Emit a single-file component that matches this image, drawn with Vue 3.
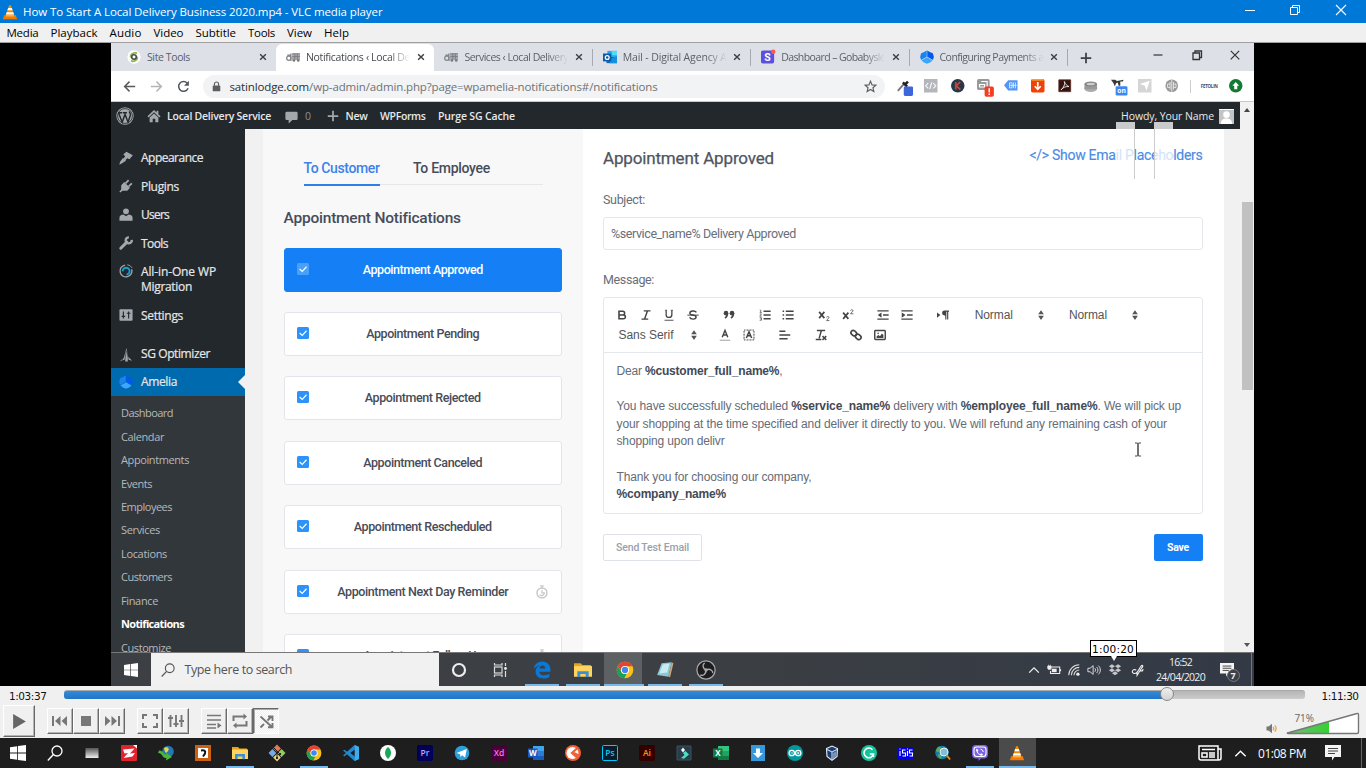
<script setup>
const measure = (el, width) => {
  const range = document.createRange()
  range.selectNodeContents(el)
  const natural = range.getBoundingClientRect().width
  el.style.letterSpacing = (width - natural) / el.textContent.length + 'px'
}
// Adjusts tracking so a single line of text takes a given width.
const vFit = { mounted: (el, { value }) => measure(el, value) }

const cone = '<path fill="#f48b00" d="M7.1 1.2h1.8L12.6 12H3.4z"/><path fill="#fff" d="M6.2 4h3.6l.8 2.3H5.4zM4.7 8.3h6.6l.8 2.2H3.9z"/><path fill="#ee7c05" d="M2.4 11h11.2l1.6 4.2H.8z"/><path fill="#ffb04a" d="M4.4 11h7.2l.4 1.4H4z"/>'
const chrome = '<circle cx="8" cy="8" r="7.4" fill="#fbc116"/><path fill="#e04436" d="M1.5 4.5A7.4 7.4 0 0 1 14.6 4.6H8A3.4 3.4 0 0 0 4.8 9.2z"/><path fill="#1ea052" d="M1.5 4.5 4.9 9.6A3.5 3.5 0 0 0 9.6 11L7.4 15.4A7.4 7.4 0 0 1 1.5 4.5z"/><circle cx="8" cy="8" r="3.6" fill="#fff"/><circle cx="8" cy="8" r="2.8" fill="#4285f4"/>'
const folder = '<path fill="#e8a317" d="M0 2h6l1.5 1.5H15V6H0z"/><path fill="#ffd45e" d="M0 4.5h16V14H0z"/><path fill="#3c8fd0" d="M3 9h10v5.2h-2.6V11.6H5.6v2.6H3z"/>'
const amelia = '<path fill="#1a84ee" d="M7.7.5v7.2L1.300 11.400A8 8 0 0 1 1.300 3.800Q4 3 7.700.5z"/><path fill="#005aee" d="M8.300.5Q12 3 14.700 3.800a8 8 0 0 1 0 7.600L8.300 7.700z"/><path fill="#3ba6ff" d="M8 8.300l6.300 3.600Q12 14.500 8 15.800 4 14.500 1.700 11.900z"/>'
const truck = '<g fill="none" stroke="#85878c" stroke-width="1.500"><circle cx="3.200" cy="9.500" r="2.400"/><path d="M5.600 4v8.500M1.500 6h4"/></g><path fill="#a6a8ad" d="M7 4h9v7.500H7z"/><path d="M7 4.300h9M7 7.500h9M10 4v7M13 4v7" stroke="#7b7d82" stroke-width="1"/><circle cx="9" cy="12" r="1.500" fill="#777"/><circle cx="14" cy="12" r="1.500" fill="#777"/>'
const win = '<path fill="#fff" d="M0 2.2 7.2 1.2v6.4H0zM8 1.1 16 0v7.6H8zM0 8.4h7.2v6.4L0 13.8zM8 8.4h8V16l-8-1.1z"/>'
const tile = (t, bg, fg, edge, size = 8.5) => `<rect x=".5" y=".5" width="15" height="15" rx="1" fill="${bg}" stroke="${edge}"/><text x="8" y="11" text-anchor="middle" font-family="Open Sans, sans-serif" font-weight="600" font-size="${size}" fill="${fg}">${t}</text>`
const office = (t, a, b, c) => `<path fill="${a}" d="M5 1h11v5H5z"/><path fill="${b}" d="M5 6h11v5H5z"/><path fill="${c}" d="M5 11h11v4H5z"/><path fill="${c}" d="M0 3.5h9.5v9H0z"/><text x="4.8" y="11" text-anchor="middle" font-family="Open Sans, sans-serif" font-weight="700" font-size="8" fill="#fff">${t}</text>`

const icons = {
  cone, chrome, folder, amelia, truck, win,
  search: '<circle cx="10" cy="6" r="5" fill="none" stroke="currentColor" stroke-width="1.3"/><path d="M6.4 9.6.8 15.4" stroke="currentColor" stroke-width="1.4"/>',
  siteTools: '<circle cx="8" cy="8" r="7.6" fill="#fff"/><path d="M11.5 3.5C7 2.5 3.5 5 4.2 8.6M4.5 12.5c4 1.3 7.8-1.2 7.1-4.9" fill="none" stroke="#8dbb52" stroke-width="2.2"/><circle cx="8" cy="8" r="2.6" fill="none" stroke="#4a4a4a" stroke-width="1.8"/>',
  outlook: '<path fill="#28a8ea" d="M5 1h11v7H5z"/><path fill="#50d9ff" d="M10 1h6v5h-6z"/><path fill="#0f66b7" d="M4 8h12v7H4z"/><path fill="#1490df" d="M10 9l6-2v8H7z"/><path fill="#0b5ba6" d="M0 4h9.5v9H0z"/><circle cx="4.8" cy="8.5" r="2.2" fill="none" stroke="#fff" stroke-width="1.4"/>',
  dash: '<rect y=".5" width="15" height="15" rx="2" fill="#5a52dd"/><text x="7.3" y="12.6" text-anchor="middle" font-family="Roboto, sans-serif" font-weight="700" font-size="12" fill="#fff">S</text><circle cx="14" cy="2" r="2.5" fill="#fa5a50"/>',
  close: '<path d="M4.2 4.2l7.6 7.6M11.8 4.2l-7.6 7.6" stroke="currentColor" stroke-width="1.9"/>',
  plus: '<path d="M8 2v12M2 8h12" stroke="currentColor" stroke-width="2"/>',
  back: '<path d="M15 8H2M8 2 2 8l6 6" fill="none" stroke="currentColor" stroke-width="1.8"/>',
  fwd: '<path d="M1 8h13M8 2l6 6-6 6" fill="none" stroke="currentColor" stroke-width="1.8"/>',
  reload: '<path d="M13.6 10.2A6 6 0 1 1 12.6 4" fill="none" stroke="currentColor" stroke-width="1.9"/><path fill="currentColor" d="M14.6 1v6H8.6z"/>',
  lock: '<rect x="2.5" y="6.4" width="11" height="8.6" rx="1" fill="currentColor"/><path d="M5 7V4.5a3 3 0 0 1 6 0V7" fill="none" stroke="currentColor" stroke-width="1.7"/>',
  star: '<path d="M8 1.6 9.9 6l4.7.4-3.6 3.1 1.1 4.7L8 11.7l-4.1 2.5L5 9.5 1.4 6.4 6.1 6z" fill="none" stroke="currentColor" stroke-width="1.4"/>',
  picker: '<path d="M1 14 8 6" stroke="#777" stroke-width="2.2"/><path d="M7 4l5 5M9.5 6.5 13 3" stroke="#222" stroke-width="3"/><rect x="8" y="9" width="11" height="11" rx="1.5" fill="#3d66db"/>',
  code: '<path fill="#b4b6bc" d="M0 0h16v16H0z"/><path d="M5 5 2 8l3 3M11 5l3 3-3 3M9.2 4 6.8 12" fill="none" stroke="#fff" stroke-width="1.2"/>',
  kred: '<circle cx="8" cy="8" r="8" fill="#26384c"/><path d="M5.6 3.5v9M11 3.5 6.4 8l4.6 4.5" fill="none" stroke="#c8473b" stroke-width="2"/>',
  alert: '<rect width="15" height="13" rx="2" fill="#999"/><path d="M3 6.5h6v3H3zM5 3h7v6" fill="none" stroke="#fff" stroke-width="1.4"/><rect x="9" y="9" width="11" height="12" rx="2" fill="#f43e22"/><path d="M14.5 11v5M14.5 17.3v1.7" stroke="#fff" stroke-width="1.7"/>',
  tag: '<path fill="#5395f5" d="M5 1.5h11v12H5L0 7.5z"/><path d="M6.5 4.5h3v6h-3zM11.2 4v7M13.5 4v7M7 7.5h8" fill="none" stroke="#e8f0ff"/>',
  down: '<rect width="16" height="16" rx="2" fill="#ee4208"/><path fill="#f6a22e" d="M1 0h14v2H1z"/><path d="M8 3.5V12M4.5 8.6 8 12.2l3.5-3.6" fill="none" stroke="#fff" stroke-width="2"/>',
  pdf: '<path fill="#351310" d="M1 1h14v14H1z" stroke="#5b2c22"/><path d="M7.5 3c1.5 3-1.5 8-4 10 2-3 6-4.500 9.500-4C11 8 8 6 7.500 3z" fill="none" stroke="#eee" stroke-width="1.1"/>',
  disk: '<ellipse cx="8" cy="11.500" rx="7.500" ry="4" fill="#aaa"/><path fill="#999" d="M.5 6h15v6H.5z"/><ellipse cx="8" cy="6" rx="7.500" ry="3" fill="#858585"/><ellipse cx="8" cy="5.800" rx="5" ry="1.500" fill="#ccc"/>',
  onx: '<path fill="#383838" d="M0 1h5l2 1.500L15 1l-1 2h-3v5H9l-1-4-2 1-1.500 4L3 5z"/><rect x="5.500" y="8.500" width="14" height="11" rx="1.500" fill="#3e86f5"/><text x="12.500" y="17" text-anchor="middle" font-family="Open Sans, sans-serif" font-weight="700" font-size="8" fill="#fff">on</text>',
  send: '<rect width="16" height="16" fill="#d5d5d5"/><path fill="#fff" d="M2 6l12-4-4 12-2-6z"/>',
  globe: '<circle cx="8" cy="8" r="7.500" fill="#999"/><path d="M6 3.500v9M10 3.500v9M8 1v14M6 6H3v4h3M10 6h3v4h-3" fill="none" stroke="#eee"/>',
  up: '<circle cx="8" cy="8" r="8" fill="#137a34"/><path fill="#fff" d="M8 3.500 12 8H9.800v4H6.200V8H4z"/>',
  wp: '<circle cx="8" cy="8" r="7.200" fill="#a3a8ad" stroke="#a3a8ad"/><circle cx="8" cy="8" r="6.600" fill="none" stroke="#23282d" stroke-width=".7"/><path d="M2.200 5.200l3.300 8.300L8 6.500l2.700 7 2-6c.5-1.700-.5-2.500-1-3.500M1.800 5.100h3.800M6.200 5.100h3.500" fill="none" stroke="#23282d" stroke-width="1.300"/>',
  home: '<path fill="#a3a8ad" d="M8 1 11 4V2h2v4l2.500 2.400-1.300 1.200L8 3.800 1.800 9.600.5 8.400zM8 5l5 4.600V15H9.500v-4h-3v4H3V9.600z"/>',
  comment: '<path fill="#a3a8ad" d="M2 1h12a1.500 1.500 0 0 1 1.500 1.500v7A1.500 1.500 0 0 1 14 11H9l-4.500 4.500V11H2A1.500 1.500 0 0 1 .5 9.500v-7A1.500 1.500 0 0 1 2 1z"/>',
  brush: '<path fill="#a3a8ad" d="M8.500.8 15.800 4.800 12 9.500 9.500 8.200 7 10.800 4.700 9 7 6.400 5 3.800z"/><path fill="#a3a8ad" d="M4.500 8 8 11 3 14.200.3 15.600l1-3.400z"/>',
  plug: '<path fill="#a3a8ad" d="M6 3.500 12.500 10 9.500 13.500H4L1.500 15.500.4 14.300 2.500 12V7z"/><path d="M7.500 5 11 1.300M11 8.500l3.700-3.500" stroke="#a3a8ad" stroke-width="2"/>',
  user: '<circle cx="8" cy="3.800" r="3.300" fill="#a3a8ad"/><path fill="#a3a8ad" d="M.5 14.500V11C.5 8.500 3 7.500 5 7.500l3 2 3-2c2 0 4.500 1 4.500 3.500v3.500z"/>',
  wrench: '<path d="M2 14 9 7" stroke="#a3a8ad" stroke-width="3.400" stroke-linecap="round"/><path d="M14.600 4.500A3.500 3.500 0 1 1 11.300 1.500" fill="none" stroke="#a3a8ad" stroke-width="2.700"/>',
  aio: '<path d="M7 1.200A6.800 6.800 0 1 0 14.500 6" fill="none" stroke="#a3a8ad" stroke-width="1.500"/><path d="M4.300 8.500A3.900 3.900 0 1 1 8.600 12" fill="none" stroke="#12a0d8" stroke-width="2.200"/><path d="M9.500.8A7.400 7.400 0 0 1 15 4.500" fill="none" stroke="#a3a8ad"/>',
  settings: '<rect x=".5" y="1.500" width="15" height="13" rx="1" fill="#a3a8ad"/><path d="M5 4v8M11 4v8M3 9.500h4M9 6h4" stroke="#23282d" stroke-width="1.300"/>',
  sg: '<path fill="#a3a8ad" d="M8.500 0 10.500 10 15 14.500 10 13v2.500H7V13l-6 2 4.500-4z"/><path d="M8.300 3 6.500 15M9 3l2 12M4.500 11l-1 4" stroke="#23282d" stroke-width=".7"/>',
  check: '<path d="M3.500 8 7 11.300 12.700 5" fill="none" stroke="#fff" stroke-width="1.500"/>',
  timer: '<circle cx="8" cy="9" r="5.700" fill="none" stroke="#c8c8c8" stroke-width="1.700"/><path d="M6 1h4M8 1v3M8 6v3h2.500A2.800 2.800 0 0 1 5.500 11" stroke="#c8c8c8" stroke-width="1.500" fill="none"/>',
  bold: '<path d="M4 3h5a2.500 2.500 0 0 1 0 5H4zM4 8h6a2.500 2.500 0 0 1 0 5H4z" fill="none" stroke="currentColor" stroke-width="2.100"/>',
  italic: '<path d="M5 2.500h9M2 13.500h9M9.800 3 6.200 13" stroke="currentColor" stroke-width="1.900"/>',
  underline: '<path d="M4.200 1.500v6a3.800 3.800 0 0 0 7.600 0v-6" fill="none" stroke="currentColor" stroke-width="1.700"/><path d="M2 15h12" stroke="currentColor" stroke-width="1.200"/><path d="M2.500 1.700h3M10.300 1.700h3" stroke="currentColor"/>',
  strike: '<path d="M12.500 4.500C11 1.800 3.800 1.800 3.800 5.500c0 3.500 8.300 1.500 8.300 5.300 0 3.500-7.300 3.500-8.600.2" fill="none" stroke="currentColor" stroke-width="1.900"/><path d="M.5 8.200h15" stroke="currentColor" stroke-width="1.300"/>',
  quote: '<g fill="currentColor"><circle cx="4" cy="5.500" r="3.100"/><circle cx="12" cy="5.500" r="3.100"/></g><path d="M5.900 5.500c0 3.500-1 5.100-3.300 6.500M13.900 5.500c0 3.500-1 5.100-3.300 6.500" fill="none" stroke="currentColor" stroke-width="2.200"/>',
  ol: '<path d="M6 3h9.500M6 8h9.500M6 13h9.500" stroke="currentColor" stroke-width="1.900"/><path d="M1 1.500h1.300v3M1 4.500h2.800M1 6.500h2.300L1 9.500h2.700M.8 11.500h2.500v3.500H.8M1.500 13.200h1.800" fill="none" stroke="currentColor" stroke-width=".9"/>',
  ul: '<path d="M5 3h10.500M5 8h10.500M5 13h10.500" stroke="currentColor" stroke-width="1.900"/><path d="M.8 3h2M.8 8h2M.8 13h2" stroke="currentColor" stroke-width="2"/>',
  sub: '<path d="M1.500 3.800l7 8.400M8.500 3.800l-7 8.400" stroke="currentColor" stroke-width="2.200"/><path d="M11.500 11.200c0-1.600 3.200-1.600 3.200.2 0 1.500-3.200 2-3.200 4h3.700" fill="none" stroke="currentColor"/>',
  sup: '<path d="M1.500 4.800l7 8.400M8.500 4.800l-7 8.400" stroke="currentColor" stroke-width="2.200"/><path d="M11.500 2.200c0-1.600 3.200-1.600 3.200.2 0 1.500-3.200 2-3.200 4h3.700" fill="none" stroke="currentColor"/>',
  outdent: '<path d="M.5 2.500h15M8 8h7.500M.5 13.500h15" stroke="currentColor" stroke-width="1.900"/><path fill="currentColor" d="M6 4.500v7L1 8z"/>',
  indent: '<path d="M.5 2.500h15M8 8h7.500M.5 13.500h15" stroke="currentColor" stroke-width="1.900"/><path fill="currentColor" d="M1 4.500v7L6 8z"/>',
  rtl: '<path fill="currentColor" d="M0 4.500v7L4.500 8zM10 2h6v1.600h-1V14h-1.500V3.600h-1V14H11V8.500H10a3.200 3.200 0 0 1 0-6.500z"/>',
  updown: '<path fill="currentColor" d="M8 1.500 11.800 7H4.200zM8 14.500 4.200 9h7.600z"/>',
  acolor: '<path d="M4.300 11 8 1.800 11.700 11M5.500 8h5" fill="none" stroke="currentColor" stroke-width="1.900"/><path d="M1 15h14" stroke="#aaa" stroke-width="1.500"/>',
  abg: '<rect x="1.500" y="1.500" width="13" height="13" fill="none" stroke="#777" stroke-width="2.500" stroke-dasharray="1 1"/><path d="M4.500 12 8 3.500 11.500 12M5.500 9h5" fill="none" stroke="currentColor" stroke-width="1.900"/>',
  align: '<path d="M.5 3h8M.5 8h14.500M.5 13h11" stroke="currentColor" stroke-width="1.900"/>',
  clean: '<path d="M2.500 2h11M8.500 2 5.500 12.500M1 14h7.500" stroke="currentColor" stroke-width="1.900"/><path d="M10 9.500l5 5M15 9.500l-5 5" stroke="currentColor" stroke-width="1.900"/>',
  link: '<g fill="none" stroke="currentColor" stroke-width="2.200"><rect x="1" y="2.500" width="8" height="6" rx="3" transform="rotate(40 5 5.500)"/><rect x="7" y="7.500" width="8" height="6" rx="3" transform="rotate(40 11 10.500)"/></g>',
  image: '<rect x="1" y="2" width="14" height="12" rx="1" fill="none" stroke="currentColor" stroke-width="1.900"/><path fill="currentColor" d="M3.500 12V9.500L6 8l2 1.500L10.500 6l2 2v4z"/><circle cx="5.500" cy="5.800" r="1.100" fill="currentColor"/>',
  ring: '<circle cx="8" cy="8" r="6" fill="none" stroke="#eee" stroke-width="2.200"/>',
  taskview: '<g fill="none" stroke="#ddd" stroke-width="1.200"><rect x="2.500" y="5" width="7.500" height="6"/><path d="M2.500 1v2h7.500V1M2.500 15v-2h7.500v2M13.500 1v3M13.500 9v6"/></g><circle cx="13.500" cy="6.500" r="1.400" fill="#eee"/>',
  edge: '<path fill="#0a78d7" d="M.6 7.200C1.200 3 4.200.5 8.200.5c4.800 0 7.300 3.300 7.300 7.300v1.700H5.600c.2 2.200 2 3.200 4.300 3.200 1.800 0 3.200-.5 4.600-1.300v3c-1.500.8-3.200 1.200-5.200 1.200-4.300 0-7-2.400-7-6.200 0-2.700 1.300-4.600 3.700-5.700C3.600 4.300 1.800 5.300.6 7.200zM5.700 6.600h5.200c0-1.600-.8-2.600-2.400-2.600-1.500 0-2.500 1-2.800 2.600z"/>',
  notepad: '<path fill="#8cc7d6" d="M5 2l9-1-3 13-10-1.500z"/><path fill="#c9ecf2" d="M6 3l6-.7-2 8L3 11z"/><path fill="#c8a878" d="M14 1l1.500 1-3 12.500L11 14z"/>',
  obs: '<circle cx="8" cy="8" r="7.300" fill="#1d1d1f" stroke="#aaa" stroke-width="1"/><g fill="none" stroke="#aaa" stroke-width="1.100"><path d="M8 8C5 6.500 5 3.500 7 2.500M8 8c3-1.500 5.600.2 5.400 2.500M8 8c.2 3.300-2.300 5-4.500 4"/><circle cx="8" cy="8" r=".8"/></g>',
  chev: '<path d="M2.500 11 8 5.500l5.500 5.500" fill="none" stroke="currentColor" stroke-width="1.500"/>',
  battery: '<path d="M5 4.500h9.500v7.500H4V9M15.500 7v2.500" fill="none" stroke="#eee" stroke-width="1.200"/><path fill="#eee" d="M5.500 6.500H11v4H5.500z"/><path d="M.8 3.500h4v2.500q0 1.500-2 1.500t-2-1.500zM1.800 2v1.500M3.800 2v1.500" fill="#eee" stroke="#eee" stroke-width=".8"/>',
  wifi: '<g fill="none" stroke="#ddd" stroke-width="1.200"><path d="M2 14A12 12 0 0 1 14 2M5 14a9 9 0 0 1 9-9M8 14a6 6 0 0 1 6-6"/></g><circle cx="12.500" cy="12.800" r="1.900" fill="#eee"/>',
  sound: '<path d="M1 6h2.500L7 3v10L3.500 10H1z" fill="none" stroke="#ddd" stroke-width="1.100"/><path d="M9 6c1 1.300 1 2.700 0 4M11 4.500c2 2.200 2 4.800 0 7M13 3c3 3 3 7 0 10" fill="none" stroke="#ddd" stroke-width="1.100"/>',
  dropbox: '<path fill="#c4c6c9" d="M4.500 1.500 8 3.700 4.500 6 1 3.700zM11.500 1.500 15 3.700 11.500 6 8 3.700zM4.500 6 8 8.300l-3.500 2.200L1 8.300zM11.500 6 15 8.300l-3.500 2.200L8 8.300zM8 9.500l3.500 2.200L8 14l-3.500-2.300z"/>',
  pen: '<path d="M6 8C1 6 0 12 4 12c4 0 5-6 8-9 2-1 2 1 0 3l-5 8 0-3M10 9h3l1-2" fill="none" stroke="#eee" stroke-width="1.300"/>',
  note: '<path fill="#f4f4f4" d="M0 0h16v12H9.500L7 15.500V12H0z"/><path d="M3 3.500h10M3 6h10M3 8.500h7" stroke="#444" stroke-width="1.100"/>',
  play: '<path fill="#666" d="M2 1v14l12-7z"/>',
  prev: '<path fill="#777" d="M0 3h2v10H0zM8.500 3v10L3 8zM15 3v10L9.500 8z"/>',
  stop: '<path fill="#777" d="M3 3h10v10H3z"/>',
  next: '<path fill="#777" d="M14 3h2v10h-2zM1 3v10l5.500-5zM7.500 3v10L13 8z"/>',
  full: '<path d="M1 6V2h4M11 2h4v4M1 10v4h4M11 14h4v-4" fill="none" stroke="#777" stroke-width="2"/>',
  eq: '<path d="M2.500 2v12M8 2v12M13.500 2v12" stroke="#777" stroke-width="1.900"/><path d="M0 5h5M5.500 11h5M11 8h5" stroke="#777" stroke-width="2.200"/>',
  list: '<path d="M1 2.500h14M1 7h14M1 11.500h9M1 15h9" stroke="#777" stroke-width="1.700"/><path fill="#777" d="M11.500 9.500v6L15.500 12.500z"/>',
  loop: '<path d="M1.500 8V3.500h11M14.500 8v4.500h-11" fill="none" stroke="#777" stroke-width="2"/><path fill="#777" d="M11.500.5v6l3.500-3zM4.500 9.500v6L1 12.500z"/>',
  shuffle: '<path d="M2.500 3.500l11 10M2.500 14.500l3.500-3.500M9.500 7.500l4-4M10 3.500h4.500V8M10 14.200h4.500V10" fill="none" stroke="#777" stroke-width="1.900"/>',
  bar: '<defs><linearGradient id="barfade" x2="0" y2="1"><stop stop-color="#555"/><stop offset="1" stop-color="#eee"/></linearGradient></defs><path fill="url(#barfade)" d="M1.500 3h13v10h-13z"/>',
  zapya: '<rect width="16" height="16" rx="1" fill="#e2232e"/><path fill="#fff" d="M2 4.500 13.500 3.500 9 8.500 14 8l-2.500 3.500L2.500 13 7 8l-3.500.5z"/><path fill="#fff" d="M12 0h4v3.500z"/>',
  idm: '<circle cx="10" cy="6.500" r="5.800" fill="#2676b8"/><path fill="#e2d848" d="M6 3c3-2 6 0 4 3S7 8 6 3z"/><path fill="#48b937" d="M1 5.500c4-1 4 4.500 7.500 4l-.5-2 6 4.500-6 3.500.3-2.500C4 13.500 5 8 0 8z"/>',
  heb: '<path fill="#c86212" d="M0 0h16v16H0z"/><path fill="#fff" d="M3 3h10v10H3z"/><path d="M6 5.500c3-.5 5 0 4 3L8 11.500" stroke="#111" stroke-width="2" fill="none"/>',
  git: '<g transform="rotate(45 8 8)"><path fill="#e77759" d="M2 2h5.500v5.500H2z"/><path fill="#79a8e5" d="M2 8.500h5.500V14H2z"/><path fill="#8fce62" d="M8.500 2H14v5.500H8.500z"/><path fill="#e9d179" d="M8.500 8.500H14V14H8.500z"/></g><path d="M5 3l6 6M8 6v7" stroke="#222"/><path fill="#222" d="M7 12h2v2H7zM10 8h2v2h-2z"/>',
  vscode: '<path fill="#1f8ad2" d="M11.500 0 16 2v12l-4.500 2L4 9.200 1.500 11.200 0 10.500 3 8 0 5.500l1.500-.7L4 6.800zM11.800 4.500 7.300 8l4.500 3.500z"/><path fill="#3fabe8" d="M11.800 0 16 2v12l-4.200 2z"/>',
  mongo: '<circle cx="8" cy="8" r="8" fill="#fff"/><path fill="#19a857" d="M8 2c4 3.500 4 8 0 12C4 10 4 5.500 8 2z"/>',
  pr: tile('Pr', '#00005b', '#b4a8ff', '#00005b'),
  telegram: '<circle cx="8" cy="8" r="7.300" fill="#2ba0da"/><path fill="#fff" d="M2.500 8 12.800 4l-1.700 8.500-3-2.200L6.500 12l-.4-2.700z"/>',
  xd: tile('Xd', '#470137', '#ff70ec', '#470137'),
  word: office('W', '#41a5ee', '#2b7cd3', '#185abd'),
  apex: '<circle cx="8" cy="8" r="8" fill="#f15f34"/><circle cx="7.500" cy="8" r="6" fill="#fff"/><path d="M13 2.500 7 8l5.500 5M9 8l4.500 2.500" fill="none" stroke="#f15f34" stroke-width="2.200"/>',
  ps: tile('Ps', '#061d2b', '#00c8ff', '#00c8ff'),
  ai: tile('Ai', '#330000', '#ff9a00', '#330000'),
  filmora: '<path fill="#293c49" d="M1 1h14v14H1z" stroke="#3a5260"/><path fill="#fff" d="M7 2.500 9 5 7 7.500 5 5z"/><path fill="#4ae0c0" d="M5 13l3.500-3L7 8l2.500-2L13 9.500 8 13.800z"/>',
  excel: office('X', '#33c481', '#21a366', '#107c41'),
  dl: '<path fill="#3498db" d="M1 0h14v16H1z"/><path fill="#fff" d="M6 3.500h4v4.500h3l-5 5-5-5h3z"/>',
  arduino: '<circle cx="8" cy="8" r="8" fill="#00979d"/><circle cx="4.800" cy="8" r="2.700" fill="none" stroke="#fff" stroke-width="1.300"/><circle cx="11.200" cy="8" r="2.700" fill="none" stroke="#fff" stroke-width="1.300"/><path d="M3.700 8H6M10 8h2.400M11.200 6.800v2.400" stroke="#fff" stroke-width=".8"/>',
  vbox: '<path fill="#1d3e72" d="M2.500 3.500 8 1l5.500 2.500L13 11.500 8 15.300 3 11.500z" stroke="#e6edf5" stroke-width="1.100"/><path d="M3 4.500 8 7l5-2.500M8 7v7" fill="none" stroke="#c8d8e8" stroke-width="1.100"/><path fill="#7292bd" d="M9 8l3.500-2v5L9 13.500z"/>',
  grammar: '<circle cx="8" cy="8" r="8" fill="#15c39a"/><path d="M11.500 4.800A4.800 4.800 0 1 0 12.500 9H8.800M12.500 9v3" fill="none" stroke="#fff" stroke-width="1.500"/>',
  isis: '<path fill="#0000e8" d="M0 2h16v12H0z"/><path d="M2 6v5M2 3.500v1M7.500 5H4.500v3h3v3h-3M9.500 6v5M9.500 3.500v1M14.500 5h-3v3h3v3h-3" fill="none" stroke="#fff" stroke-width="1.100"/>',
  maps: '<circle cx="7" cy="7.500" r="6.800" fill="#187ea8"/><path fill="#52aa6c" d="M3 2c3-1 4 2 2 4S1 7 1 5zM3 9l4 1-1 4C4 13 3 12 3 9z"/><circle cx="9" cy="7" r="4" fill="#7cc0dc" stroke="#eee"/><path d="M11.500 10 15 14.500" stroke="#df8d24" stroke-width="2"/>',
  viber: '<path fill="#7c63e6" d="M3.500 0h9Q16 0 16 4v5q0 4-3.500 4.500H9L6.500 16v-2.500h-3Q0 13 0 9V4q0-4 3.500-4z"/><path fill="none" stroke="#fff" stroke-width="1.100" d="M4.500 2h7Q14 2 14 4.500v4Q14 11.500 11.500 11.500h-7Q2 11.500 2 8.500v-4Q2 2 4.500 2z"/><path fill="#fff" d="M5 3.500l1.500 2-1 1.300q.8 1.700 2.500 2.500l1.300-1 1.700 1.300q-.5 1.500-2 1.200Q5 9 4 5.300q-.2-1.300 1-1.800z"/><path d="M8.500 4q2.500.5 2.800 3" fill="none" stroke="#fff"/>',
  speaker: '<path fill="#777" d="M0 5h3l5-4v14l-5-4H0z"/><path d="M9.500 5.500q2 2.500 0 5M12 3.500q4 4.500 0 9" fill="none" stroke="#f59a23" stroke-width="1.700"/>',
}

const menus = [['Media', 32], ['Playback', 47], ['Audio', 32], ['Video', 30], ['Subtitle', 40.5], ['Tools', 27], ['View', 25], ['Help', 25]]
const tabs = [
  ['siteTools', 'Site Tools', 43], ['truck', 'Notifications ‹ Local De', 104], ['truck', 'Services ‹ Local Delivery', 104],
  ['outlook', 'Mail - Digital Agency A', 104], ['dash', 'Dashboard – Gobabysle', 104], ['amelia', 'Configuring Payments a', 104],
]
const exts = ['picker', 'code', 'kred', 'alert', 'tag', 'down', 'pdf', 'disk', 'onx', 'send', 'globe']
const side = [['brush', 'Appearance', 62], ['plug', 'Plugins', 38], ['user', 'Users', 28], ['wrench', 'Tools', 27]]
const subs = [['Dashboard', 52], ['Calendar', 43], ['Appointments', 68], ['Events', 31], ['Employees', 51], ['Services', 39], ['Locations', 46], ['Customers', 51], ['Finance', 37], ['Notifications', 63], ['Customize', 50]]
const cards = [['Approved', 120], ['Pending', 113], ['Rejected', 116], ['Canceled', 119], ['Rescheduled', 138], ['Next Day Reminder', 171], ['Follow Up', 119]]
const row1 = [['bold', 'italic', 'underline', 'strike'], ['quote'], ['ol', 'ul'], ['sub', 'sup'], ['outdent', 'indent'], ['rtl']]
const row2 = [['acolor', 'abg'], ['align'], ['clean'], ['link', 'image']]
const innerApps = [['ring', 40], ['taskview', 42], ['edge', 42], ['folder', 40], ['chrome', 44], ['notepad', 36], ['obs', 46]]
const apps = ['win', 'search', 'bar', 'zapya', 'idm', 'heb', 'folder', 'git', 'chrome', 'vscode', 'mongo', 'pr', 'telegram', 'xd', 'word', 'apex', 'ps', 'ai', 'filmora', 'excel', 'dl', 'arduino', 'vbox', 'grammar', 'isis', 'maps', 'viber', 'cone']
const running = ['folder', 'chrome', 'viber', 'cone']
const controls = [['prev', 'stop', 'next'], ['full', 'eq'], ['list', 'loop', 'shuffle']]
</script>

<template>
  <div class="desktop">
    <header class="title">
      <svg class="i16" viewBox="0 0 16 16" v-html="icons.cone"></svg>
      <span v-fit="359.500" class="name">How To Start A Local Delivery Business 2020.mp4 - VLC media player</span>
      <div class="winbtns">
        <svg viewBox="0 0 12 12"><path d="M1 6.500h10" stroke="#fff" /></svg>
        <svg viewBox="0 0 12 12"><path d="M.5 3.500h7v7h-7zM2.500 3.500v-2h7v7h-2" fill="none" stroke="#fff" /></svg>
        <svg viewBox="0 0 12 12"><path d="M1 1l10 10M11 1 1 11" stroke="#fff" stroke-width="1.100" /></svg>
      </div>
    </header>
    <nav class="menu"><span v-for="m in menus" :key="m[0]" v-fit="m[1]" class="mi" :style="{ width: m[1] + 'px' }">{{ m[0] }}</span></nav>

    <main class="video">
      <div class="screen">
        <div class="tabstrip">
          <div v-for="(t, i) in tabs" :key="i" class="tab" :class="{ first: i === 0, active: i === 1, sep: i > 1 }">
            <svg class="i14" viewBox="0 0 16 16" v-html="icons[t[0]]"></svg>
            <span class="tabtext" :class="{ fade: i > 0 }"><span v-fit="t[2]">{{ t[1] }}</span></span>
            <svg class="tabx" viewBox="0 0 16 16" v-html="icons.close"></svg>
          </div>
          <svg class="newtab" viewBox="0 0 16 16" v-html="icons.plus"></svg>
          <div class="chromebtns">
            <svg viewBox="0 0 12 12"><path d="M1.500 6h9" stroke="#333" stroke-width="1.200" /></svg>
            <svg viewBox="0 0 12 12"><path d="M2 4h6.500v6.500H2zM4 4V2h6.500v6.500h-2" fill="none" stroke="#333" stroke-width="1.300" /></svg>
            <svg viewBox="0 0 12 12"><path d="M1.800 1.800l8.500 8.500M10.200 1.800l-8.500 8.500" stroke="#333" stroke-width="1.200" /></svg>
          </div>
        </div>

        <div class="toolbar">
          <svg class="nav" viewBox="0 0 16 16" v-html="icons.back"></svg>
          <svg class="nav dim" viewBox="0 0 16 16" v-html="icons.fwd"></svg>
          <svg class="nav" viewBox="0 0 16 16" v-html="icons.reload"></svg>
          <div class="omni">
            <svg class="lock" viewBox="0 0 16 16" v-html="icons.lock"></svg>
            <span v-fit="428" class="url"><b>satinlodge.com</b>/wp-admin/admin.php?page=wpamelia-notifications#/notifications</span>
            <svg class="star" viewBox="0 0 16 16" v-html="icons.star"></svg>
          </div>
          <div class="exts">
            <span v-for="e in exts" :key="e" class="ext"><svg class="i13" viewBox="0 0 16 16" v-html="icons[e]"></svg></span>
            <i class="vline"></i>
            <span v-fit="17" class="tiny">FETOLIN</span>
            <svg class="i13" viewBox="0 0 16 16" v-html="icons.up"></svg>
          </div>
        </div>

        <div class="page">
          <div class="site">
            <div class="wpbar">
              <svg class="wplogo" viewBox="0 0 16 16" v-html="icons.wp"></svg>
              <svg class="home" viewBox="0 0 16 16" v-html="icons.home"></svg>
              <span v-fit="104" class="w104">Local Delivery Service</span>
              <svg class="comment" viewBox="0 0 16 16" v-html="icons.comment"></svg>
              <span class="zero">0</span>
              <svg class="add" viewBox="0 0 16 16" v-html="icons.plus"></svg>
              <span v-fit="22" class="w22">New</span>
              <span v-fit="45.500" class="w45">WPForms</span>
              <span v-fit="77" class="w77">Purge SG Cache</span>
              <span v-fit="93" class="howdy">Howdy, Your Name</span>
              <svg class="avatar" viewBox="0 0 16 16"><path fill="#c4c4c4" d="M0 0h16v16H0z" /><circle cx="8" cy="6" r="3.500" fill="#fff" /><path fill="#fff" d="M2 16c0-5 3-6 6-6s6 1 6 6zM0 0h16v1H0z" /></svg>
            </div>

            <div class="body">
              <aside class="side">
                <div v-for="s in side" :key="s[1]" class="srow">
                  <svg class="i14" viewBox="0 0 16 16" v-html="icons[s[0]]"></svg><span v-fit="s[2]">{{ s[1] }}</span>
                </div>
                <div class="srow tall">
                  <svg class="i14" viewBox="0 0 16 16" v-html="icons.aio"></svg>
                  <div class="two"><div v-fit="75">All-in-One WP</div><div v-fit="51">Migration</div></div>
                </div>
                <div class="srow"><svg class="i14" viewBox="0 0 16 16" v-html="icons.settings"></svg><span v-fit="42">Settings</span></div>
                <div class="srow gap"><svg class="i14 low" viewBox="0 0 16 16" v-html="icons.sg"></svg><span v-fit="69">SG Optimizer</span></div>
                <div class="srow current"><svg class="i14" viewBox="0 0 16 16" v-html="icons.amelia"></svg><span v-fit="36">Amelia</span><i class="arrow"></i></div>
                <div class="subs">
                  <div v-for="s in subs" :key="s[0]" v-fit="s[1]" class="sub" :class="{ on: s[0] === 'Notifications' }">{{ s[0] }}</div>
                </div>
              </aside>

              <section class="list">
                <div class="ltabs"><span v-fit="76" class="lt on">To Customer</span><span v-fit="77" class="lt">To Employee</span></div>
                <h2><span v-fit="177">Appointment Notifications</span></h2>
                <div v-for="(c, i) in cards" :key="c[0]" class="card" :class="{ picked: i === 0 }">
                  <span class="box"><svg viewBox="0 0 16 16" v-html="icons.check"></svg></span>
                  <span v-fit="c[1]" class="ctext">Appointment {{ c[0] }}</span>
                  <svg v-if="i > 4" class="timer" viewBox="0 0 16 16" v-html="icons.timer"></svg>
                </div>
              </section>

              <section class="detail">
                <div class="dhead"><h1 v-fit="171">Appointment Approved</h1><span v-fit="173" class="show">&lt;/&gt; Show Email Placeholders</span></div>
                <div class="label l1"><span v-fit="42">Subject:</span></div>
                <div class="input"><span v-fit="185">%service_name% Delivery Approved</span></div>
                <div class="label l2"><span v-fit="51">Message:</span></div>
                <div class="editor">
                  <div class="qbar">
                    <div class="qrow">
                      <div v-for="(g, i) in row1" :key="i" class="qg"><span v-for="k in g" :key="k" class="qi"><svg viewBox="0 0 16 16" v-html="icons[k]"></svg></span></div>
                      <div class="pick"><span v-fit="38">Normal</span><svg viewBox="0 0 16 16" v-html="icons.updown"></svg></div>
                      <div class="pick"><span v-fit="38">Normal</span><svg viewBox="0 0 16 16" v-html="icons.updown"></svg></div>
                    </div>
                    <div class="qrow">
                      <div class="pick wide"><span v-fit="55">Sans Serif</span><svg viewBox="0 0 16 16" v-html="icons.updown"></svg></div>
                      <div v-for="(g, i) in row2" :key="i" class="qg"><span v-for="k in g" :key="k" class="qi"><svg viewBox="0 0 16 16" v-html="icons[k]"></svg></span></div>
                    </div>
                  </div>
                  <div class="mail">
                    <div v-fit="166">Dear <b>%customer_full_name%</b>,</div>
                    <div class="blank"></div>
                    <div v-fit="564.500">You have successfully scheduled <b>%service_name%</b> delivery with <b>%employee_full_name%</b>. We will pick up</div>
                    <div v-fit="550.500">your shopping at the time specified and deliver it directly to you. We will refund any remaining cash of your</div>
                    <div v-fit="108">shopping upon delivr</div>
                    <div class="blank"></div>
                    <div v-fit="195">Thank you for choosing our company,</div>
                    <div v-fit="109.500"><b>%company_name%</b></div>
                  </div>
                </div>
                <div class="actions"><button class="test"><span v-fit="73">Send Test Email</span></button><button class="save"><span v-fit="22">Save</span></button></div>
                <svg class="caret" viewBox="0 0 8 15"><path d="M1 1h2q1 0 1 1v11q0 1-1 1H1M7 1H5Q4 1 4 2v11q0 1 1 1h2" fill="none" stroke="#444" /></svg>
              </section>
              <div class="gutter"></div>
            </div>
          </div>
          <div class="scroll"><i class="up"></i><i class="thumb"></i><i class="dn"></i></div>
        </div>

        <div class="itask">
          <div class="istart"><svg viewBox="0 0 16 16" v-html="icons.win"></svg></div>
          <div class="isearch"><svg viewBox="0 0 16 16" v-html="icons.search"></svg><span v-fit="107.500">Type here to search</span></div>
          <div v-for="a in innerApps" :key="a[0]" class="iapp" :class="a[0]" :style="{ width: a[1] + 'px' }"><svg viewBox="0 0 16 16" v-html="icons[a[0]]"></svg></div>
          <div class="itray">
            <svg v-for="k in ['chev', 'battery', 'wifi', 'sound', 'dropbox', 'pen']" :key="k" :class="k" viewBox="0 0 16 16" v-html="icons[k]"></svg>
          </div>
          <div class="iclock"><div v-fit="23">16:52</div><div v-fit="49">24/04/2020</div></div>
          <div class="inote"><svg viewBox="0 0 16 16" v-html="icons.note"></svg><span class="badge">7</span></div>
        </div>
        <div class="pause"><i></i><i></i></div>
      </div>
    </main>

    <section class="player">
      <div class="seek">
        <span v-fit="37.500" class="time">1:03:37</span>
        <div class="track"><div class="fill"></div><i class="knob"></i><div class="tip"><span v-fit="42">1:00:20</span></div></div>
        <span v-fit="37" class="time end">1:11:30</span>
      </div>
      <div class="controls">
        <button class="btn big"><svg viewBox="0 0 16 16" v-html="icons.play"></svg></button>
        <div v-for="(g, i) in controls" :key="i" class="cg">
          <button v-for="k in g" :key="k" class="btn" :class="{ down: k === 'shuffle' }"><svg viewBox="0 0 16 16" v-html="icons[k]"></svg></button>
        </div>
        <div class="volume">
          <svg class="spk" viewBox="0 0 16 16" v-html="icons.speaker"></svg>
          <svg class="wedge" viewBox="0 0 74 32">
            <defs><linearGradient id="vol"><stop stop-color="#7db67d" /><stop offset="1" stop-color="#32d232" /></linearGradient></defs>
            <path fill="#fff" d="M1 27 72 7v19q0 1-1 1z" /><path fill="url(#vol)" d="M2 27 43 15.500V27z" />
            <path d="M1.500 27 71 7.500q1.500-.5 1.500 1V26q0 1.500-1.500 1.500H2q-1 0-.5-1z" fill="none" stroke="#777" stroke-width="1.400" />
            <text x="8.500" y="15.800" textLength="19.500" font-family="Open Sans, sans-serif" font-size="10" fill="#666">71%</text>
          </svg>
        </div>
      </div>
    </section>

    <footer class="task">
      <div v-for="(a, i) in apps" :key="a" class="app" :class="{ start: i === 0, run: running.includes(a), cur: a === 'cone' }"><svg viewBox="0 0 16 16" v-html="icons[a]"></svg></div>
      <div class="tray">
        <svg class="news" viewBox="0 0 24 16"><path d="M1 1h19v14H3q-2 0-2-2zM20 4h3v9q0 2-2 2H3M4 4.500h13M4 8h5v4H4zM11 8h6M11 10h6M11 12h6" fill="none" stroke="#fff" stroke-width="1.500" /></svg>
        <svg class="tchev" viewBox="0 0 16 16" v-html="icons.chev"></svg>
        <span v-fit="48" class="clock">01:08 PM</span>
        <svg class="i16" viewBox="0 0 16 16" v-html="icons.note"></svg>
        <i class="edge-line"></i>
      </div>
    </footer>
  </div>
</template>

<style>
body { margin: 0; overflow: hidden; }
</style>
<style scoped>
* { box-sizing: border-box; }
svg { display: block; flex: none; overflow: visible; }
span, h1, h2 { white-space: nowrap; }
h1, h2 { margin: 0; font-weight: 500; }
button { padding: 0; margin: 0; border: 0; display: flex; align-items: center; justify-content: center; }
.desktop { width: 1366px; height: 768px; display: flex; flex-direction: column; font-family: "Open Sans", "Noto Sans", sans-serif; font-size: 11.5px; overflow: hidden; }
.i16 { width: 16px; height: 16px; }
.i14 { width: 14px; height: 14px; }
.i13 { width: 13.500px; height: 13.500px; }
.title { height: 23px; flex: none; background: #0078d7; color: #fff; display: flex; align-items: center; padding-left: 2px; }
.title .name { margin-left: 5px; }
.winbtns { margin-left: auto; display: flex; gap: 33.500px; padding-right: 19px; margin-top: -3px; }
.winbtns svg { width: 12px; height: 12px; }
.menu { height: 20px; flex: none; background: #f0f0f0; border-bottom: 1px solid #a0a0a0; display: flex; gap: 12px; padding-left: 6.500px; align-items: center; color: #000; }
.video { height: 643px; flex: none; background: #000; padding: 0 112px 0 111px; }
.screen { position: relative; height: 643px; display: flex; flex-direction: column; overflow: hidden; background: #fff; }

.tabstrip { height: 28px; flex: none; background: #dde0e7; display: flex; color: #5b5f66; font-size: 10.500px; }
.tab { width: 158.400px; display: flex; align-items: center; padding: 0 7px 0 10px; position: relative; flex: none; }
.tab.first { width: 165px; padding-left: 16px; padding-right: 7px; }
.tab.active { background: #fff; border-radius: 6px 6px 0 0; color: #46494e; margin-top: 1px; padding-bottom: 1px; }
.tab.sep { border-right: 1px solid #a6a9af; border-image: linear-gradient(transparent 22%, #a6a9af 22%, #a6a9af 80%, transparent 80%) 1; }
.tabtext { width: 104px; margin-left: 6px; overflow: hidden; }
.fade { mask-image: linear-gradient(90deg, #000 80%, transparent); }
.tabx { width: 12px; height: 12px; color: #3c3f43; margin-left: auto; }
.newtab { width: 14px; height: 14px; margin: 7.500px 0 0 11.500px; color: #3c3f43; }
.chromebtns { margin: 6px 13px 0 auto; display: flex; gap: 26.500px; }
.chromebtns svg { width: 12px; height: 12px; }

.toolbar { height: 31px; flex: none; display: flex; align-items: center; border-bottom: 1px solid #c9c9c9; }
.nav { width: 13px; height: 13px; margin-left: 12px; margin-right: 2px; color: #55595e; }
.nav.dim { color: #b3b5b8; }
.omni { margin-left: 10.500px; height: 23px; width: 682px; border-radius: 12px; background: #f1f3f4; display: flex; align-items: center; padding: 0 8px; flex: none; }
.lock { width: 11px; height: 11px; color: #5b5e62; }
.url { font-size: 11.500px; color: #6e7277; margin-left: 8px; }
.url b { font-weight: 400; color: #2c2f33; }
.star { width: 13px; height: 13px; margin-left: auto; color: #5b5e62; }
.exts { display: flex; align-items: center; margin-left: 6px; }
.ext { width: 26.750px; display: flex; justify-content: center; }
.vline { width: 1px; height: 13px; background: #ccc; margin: 0 10px 0 5px; }
.tiny { font-size: 4.500px; font-weight: 700; color: #444a66; width: 17px; margin-right: 11.500px; }

.page { height: 550px; display: flex; flex: none; overflow: hidden; }
.site { width: 1129px; }
.wpbar { height: 27px; background: #23282d; color: #e8e9ea; font-size: 10.500px; font-weight: 600; display: flex; align-items: center; padding: 1px 0 0 5px; }
.wplogo { width: 18px; height: 18px; }
.home { width: 14px; height: 14px; margin: 0 6px 0 13px; }
.w104 { width: 104px; }
.comment { width: 13px; height: 13px; margin: 2px 7px 0 14px; }
.zero { width: 7px; color: #8d9297; font-weight: 400; }
.add { width: 14px; height: 14px; margin: 0 6px 0 13.500px; color: #a3a8ad; }
.w22 { width: 22px; }
.w45 { width: 45.500px; margin-left: 12.500px; }
.w77 { margin-left: 12.500px; }
.howdy { margin-left: auto; width: 93px; font-weight: 400; }
.avatar { width: 15px; height: 15px; margin: 0 6px 0 5px; }
.body { height: 523px; display: flex; background: #fff; }

.side { width: 134px; background: #23282d; padding-top: 14.500px; color: #e6e7e8; font-size: 12px; overflow: hidden; flex: none; }
.srow { height: 28.500px; display: flex; align-items: center; padding-left: 8px; position: relative; -webkit-text-stroke: .2px #e6e7e8; }
.srow > span, .two { margin-left: 8px; }
.srow.tall { height: 43.500px; align-items: flex-start; padding-top: 6px; }
.two { line-height: 15px; white-space: nowrap; }
.srow.gap { margin-top: 9.500px; }
.low { margin-top: 4px; }
.current { background: #006aae; height: 28px; }
.arrow { position: absolute; right: 0; top: 7px; border: 7px solid transparent; border-left: 0; border-right-color: #f1f1f1; }
.subs { background: #32373c; height: 260px; padding: 5.700px 0 0 10px; font-size: 11px; color: #b5b9bd; }
.sub { height: 23.450px; line-height: 23.450px; white-space: nowrap; }
.sub.on { color: #fff; font-weight: 700; }

.list { width: 338px; flex: none; border-left: 18px solid #f1f1f1; background: #f8f8f9; padding: 27px 21px 0 20.500px; font-family: Roboto, sans-serif; color: #474c59; overflow: hidden; }
.ltabs { height: 29px; margin: 0 19.500px 0 20px; border-bottom: 1px solid #e5e7ea; display: flex; gap: 33.500px; font-size: 14px; font-weight: 500; }
.lt { height: 29.500px; line-height: 24px; width: 77px; }
.lt.on { width: 76px; color: #3c82e9; border-bottom: 2px solid #2f7fe6; }
h2 { font-size: 15.500px; height: 62.500px; line-height: 66.500px; }
.card { height: 44px; margin-bottom: 20.450px; border: 1px solid #e2e6ec; border-radius: 3px; background: #fff; display: flex; align-items: center; justify-content: center; position: relative; font-size: 12.500px; font-weight: 500; }
.picked { background: #1580f5; border-color: #1580f5; color: #fff; }
.box { position: absolute; left: 12px; top: 14px; width: 12px; height: 12px; border-radius: 1.500px; background: #2e92fb; }
.picked .box { background: #4a9ff9; }
.box svg { width: 12px; height: 12px; }
.ctext { margin-top: -1px; }
.timer { position: absolute; right: 12px; top: 14px; width: 14px; height: 14px; }

.detail { width: 641px; padding: 17.500px 21.500px 0 20px; position: relative; font-family: Roboto, sans-serif; color: #686e7a; font-size: 12.500px; flex: none; }
.dhead { display: flex; justify-content: space-between; height: 22px; }
h1 { font-size: 17px; line-height: 22px; color: #4f5561; font-weight: 400; -webkit-text-stroke: .25px #4f5561; }
.show { color: #4a8be6; font-size: 14px; line-height: 16px; width: 173px; -webkit-text-stroke: .15px #4a8be6; }
.label { height: 20px; line-height: 20px; }
.l1 { margin-top: 21px; }
.input { margin-top: 7px; height: 33px; border: 1px solid #e4e8ec; border-radius: 3px; padding-left: 7px; display: flex; align-items: center; }
.l2 { margin-top: 20.500px; }
.editor { margin-top: 7px; border: 1px solid #e4e8ec; border-radius: 3px; height: 217px; font-family: "Liberation Sans", Arial, sans-serif; }
.qbar { height: 54.500px; border-bottom: 1px solid #e4e8ec; padding: 6.500px 0 0 6.500px; color: #444; }
.qrow { height: 20.500px; display: flex; gap: 12.200px; align-items: center; }
.qg { display: flex; }
.qi { width: 23.600px; display: flex; justify-content: center; }
.qi svg { width: 12px; height: 12px; }
.pick { width: 82px; display: flex; justify-content: space-between; align-items: center; padding: 0 1.500px 0 8px; font-size: 12px; color: #555; }
.pick.wide { width: 91px; padding-right: 2px; }
.pick svg { width: 12px; height: 12px; }
.mail { padding: 10.500px 0 0 12.500px; font-size: 12px; line-height: 17.600px; color: #666b76; white-space: nowrap; }
.mail b { color: #434955; }
.blank { height: 17.600px; }
.actions { display: flex; justify-content: space-between; margin-top: 19.500px; }
button { font-family: Roboto, sans-serif; }
.test { width: 99px; height: 27px; border: 1px solid #dfe2e7; border-radius: 2px; background: #fff; color: #9aa1ad; font-size: 10.500px; font-weight: 500; }
.save { width: 49px; height: 27px; border-radius: 2px; background: #1580f5; color: #fff; font-size: 10.500px; font-weight: 700; }
.caret { position: absolute; left: 551px; top: 312.500px; width: 8px; height: 15px; }
.gutter { width: 16px; background: #f1f1f1; }
.scroll { width: 14px; background: #f1f1f1; display: flex; flex-direction: column; align-items: center; padding: 6px 0 5px; }
.up { border: 3px solid transparent; border-top: 0; border-bottom: 4px solid #444; }
.thumb { width: 11px; height: 188px; background: #c1c1c1; margin-top: 90px; }
.dn { border: 3px solid transparent; border-bottom: 0; border-top: 4px solid #555; margin-top: auto; }

.itask { height: 34px; flex: none; background: linear-gradient(90deg, #3c3f43 50%, #333a46); display: flex; align-items: center; color: #eee; border-top: 1px solid #777; }
.istart { width: 40px; display: flex; justify-content: center; }
.istart svg { width: 14px; height: 14px; }
.isearch { width: 288px; height: 33px; background: #f1f1f1; color: #555; display: flex; align-items: center; font-size: 12.500px; padding-left: 10px; flex: none; }
.isearch svg { width: 14px; height: 14px; margin-right: 9.500px; }
.iapp { height: 33px; display: flex; align-items: center; justify-content: center; flex: none; }
.iapp svg { width: 18px; height: 18px; }
.iapp.ring svg, .iapp.taskview svg { width: 16px; height: 16px; }
.iapp.obs svg { width: 20px; height: 20px; }
.iapp.edge, .iapp.folder, .iapp.obs, .iapp.notepad { background: linear-gradient(#76b9ed, #76b9ed) center bottom / 34px 2px no-repeat; }
.iapp.chrome { background: linear-gradient(#5d6164, #5d6164) 1px 0 / 38px 31px no-repeat, linear-gradient(#76b9ed, #76b9ed) 1px bottom / 40px 2px no-repeat; }
.itray { margin-left: auto; display: flex; gap: 6.300px; margin-right: 11.500px; padding-top: 1px; }
.itray svg { width: 14px; height: 14px; }
.itray .pen { margin-left: 2.500px; }
.iclock { font-size: 10.500px; line-height: 14.500px; width: 49px; display: flex; flex-direction: column; align-items: center; white-space: nowrap; }
.inote { position: relative; width: 32px; border-right: 1px solid #777; height: 33px; margin: 0 2px 0 15px; }
.inote svg { width: 14px; height: 14px; margin-top: 9.500px; }
.badge { position: absolute; left: 6.500px; top: 16px; width: 13px; height: 13px; line-height: 12px; border-radius: 50%; background: #3c4048; border: 1px solid #777; text-align: center; font-size: 9px; font-weight: 700; }
.pause { position: absolute; left: 1005px; top: 79px; display: flex; gap: 19px; }
.pause i { width: 19px; height: 57px; background: rgba(255, 255, 255, .76); border-right: 1px solid #ccc; }
.pause i + i { border-right: 0; border-left: 1px solid #ccc; }

.player { height: 52px; flex: none; background: #f0f0f0; }
.seek { height: 19px; display: flex; align-items: flex-start; color: #111; font-family: "DejaVu Sans", sans-serif; font-size: 10.500px; }
.time { width: 37.500px; margin: 4px 17px 0 9px; line-height: 13px; }
.time.end { margin: 4px 0 0 17px; width: 37px; }
.track { position: relative; width: 1241px; height: 9px; margin-top: 4px; border-radius: 3px; background: linear-gradient(#b5b5b5, #ccc); border-top: 1px solid #aaa; }
.fill { width: 1103px; height: 8px; background: linear-gradient(#318bdc, #2375c4); border-radius: 3px 0 0 3px; }
.knob { position: absolute; left: 1096px; top: -4px; width: 14px; height: 14px; border-radius: 50%; background: linear-gradient(#eee, #d3d3d3); border: 1px solid #888; }
.tip { position: absolute; left: 1026px; top: -51px; width: 47px; height: 17px; background: #fff; border: 1px solid #000; font-size: 10.500px; line-height: 16px; padding-left: 1.500px; color: #000; }
.tip::after { content: ""; position: absolute; left: 20px; top: 15px; border: 3.500px solid transparent; border-top: 5px solid #fff; border-bottom: 0; }
.controls { display: flex; align-items: center; padding-left: 3px; height: 32px; }
.btn { width: 26px; height: 26px; background: #f0f0f0; border: 1px solid; border-color: #fff #696969 #696969 #fff; box-shadow: inset -1px -1px #b5b5b5; }
.btn svg { width: 16px; height: 16px; }
.btn.big { width: 32px; height: 32px; }
.btn.big svg { width: 17px; height: 17px; }
.btn.down { border-color: #696969 #fff #fff #696969; box-shadow: inset 1px 1px #aaa; background: repeating-conic-gradient(#fff 0 25%, #efefef 0 50%) 0 0 / 2px 2px; }
.cg { display: flex; margin-left: 12px; }
.volume { margin-left: auto; display: flex; align-items: flex-end; padding-right: 6px; height: 32px; }
.spk { width: 12px; height: 11px; margin: 0 8px 3px 0; }
.wedge { width: 74px; height: 32px; margin-bottom: -1px; }

.task { height: 30px; flex: none; background: #1e1e1e; display: flex; align-items: center; color: #fff; }
.app { width: 37px; height: 30px; flex: none; display: flex; align-items: center; justify-content: center; }
.app.start { width: 36.500px; }
.app svg { width: 16px; height: 16px; }
.run { background: linear-gradient(#76b9ed, #76b9ed) center bottom / 28px 2px no-repeat; }
.cur { background: linear-gradient(#76b9ed, #76b9ed) center bottom / 37px 2px no-repeat, #4b4b4b; }
.tray { margin-left: auto; display: flex; align-items: center; height: 30px; }
.news { width: 24px; height: 16px; }
.tchev { width: 15px; height: 15px; margin: 0 10px 0 11px; }
.clock { width: 48px; margin-right: 19px; font-size: 12px; }
.edge-line { width: 1px; height: 30px; background: #666; margin: 0 4px 0 20px; }
</style>
